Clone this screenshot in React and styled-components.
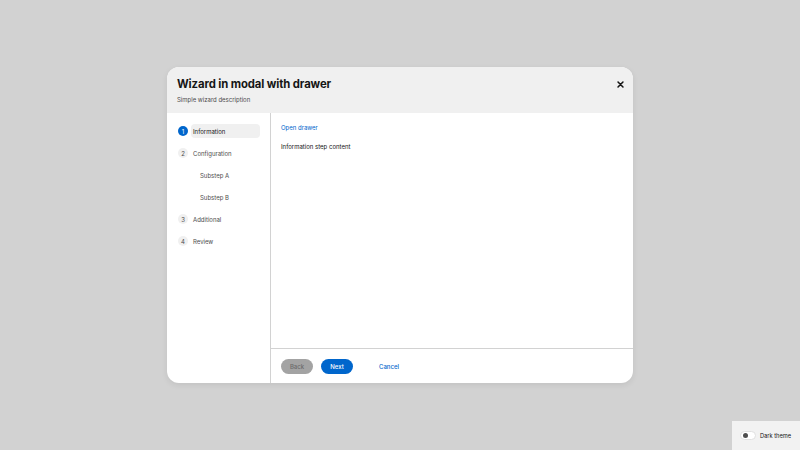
import React, { useState } from 'react';
import styled, { createGlobalStyle } from 'styled-components';

const GlobalStyle = createGlobalStyle`
  html, body {
    margin: 0;
    padding: 0;
    height: 100%;
  }
  body {
    background: #d2d2d2;
    font-family: Inter, "Noto Sans", sans-serif;
    color: #151515;
  }
  #root {
    height: 100%;
  }
`;

const steps = [
  { id: 1, name: 'Information', number: 1 },
  { id: 2, name: 'Configuration', number: 2 },
  { id: 3, name: 'Substep A', sub: true },
  { id: 4, name: 'Substep B', sub: true },
  { id: 5, name: 'Additional', number: 3 },
  { id: 6, name: 'Review', number: 4 },
];

const App = () => {
  const [current] = useState(1);
  const [dark, setDark] = useState(false);

  return (
    <>
      <GlobalStyle />
      <Page>
        <Modal>
          <Header>
            <TitleBlock>
              <Title>Wizard in modal with drawer</Title>
              <Description>Simple wizard description</Description>
            </TitleBlock>
            <CloseButton aria-label="Close">
              <svg width="7" height="7" viewBox="0 0 10 10">
                <path d="M1.5 1.5 L8.5 8.5 M8.5 1.5 L1.5 8.5" stroke="#151515" strokeWidth="2.2" strokeLinecap="round" />
              </svg>
            </CloseButton>
          </Header>
          <Wizard>
            <Nav>
              {steps.map((step) => (
                <NavItem key={step.id} $sub={step.sub}>
                  {!step.sub && <StepNumber $active={step.id === current}>{step.number}</StepNumber>}
                  <StepLabel $active={step.id === current}>{step.name}</StepLabel>
                </NavItem>
              ))}
            </Nav>
            <Main>
              <Body>
                <LinkText>Open drawer</LinkText>
                <BodyText>Information step content</BodyText>
              </Body>
              <Footer>
                <Button $variant="disabled">Back</Button>
                <Button $variant="primary">Next</Button>
                <Button $variant="link">Cancel</Button>
              </Footer>
            </Main>
          </Wizard>
        </Modal>
        <ThemePanel>
          <Switch $on={dark} onClick={() => setDark(!dark)}>
            <Knob $on={dark} />
          </Switch>
          <SwitchLabel>Dark theme</SwitchLabel>
        </ThemePanel>
      </Page>
    </>
  );
};

const Page = styled.div`
  position: relative;
  height: 450px;
  display: flex;
  align-items: center;
  justify-content: center;
`;

const Modal = styled.div`
  width: 466px;
  height: 316px;
  background: #ffffff;
  border-radius: 12px;
  overflow: hidden;
  display: flex;
  flex-direction: column;
  box-shadow: 0 2px 6px rgba(0, 0, 0, 0.08);
`;

const Header = styled.div`
  background: #f0f0f0;
  height: 46px;
  box-sizing: border-box;
  padding: 10px 7px 0 10px;
  display: flex;
  justify-content: space-between;
  align-items: flex-start;
  flex-shrink: 0;
`;

const TitleBlock = styled.div`
  display: flex;
  flex-direction: column;
`;

const Title = styled.h1`
  margin: 0;
  font-size: 11.3px;
  font-weight: 700;
  line-height: 15px;
  letter-spacing: -0.1px;
  color: #151515;
`;

const Description = styled.p`
  margin: 4px 0 0 0;
  font-size: 6px;
  line-height: 8px;
  color: #4d4d4d;
`;

const CloseButton = styled.button`
  border: none;
  background: transparent;
  padding: 0;
  margin-top: 1px;
  width: 12px;
  height: 12px;
  display: flex;
  align-items: center;
  justify-content: center;
  cursor: pointer;
`;

const Wizard = styled.div`
  flex: 1;
  display: flex;
  min-height: 0;
`;

const Nav = styled.div`
  width: 104px;
  flex-shrink: 0;
  border-right: 1px solid #d2d2d2;
  padding: 11px 10px 0 11px;
  box-sizing: border-box;
  display: flex;
  flex-direction: column;
  gap: 8px;
`;

const NavItem = styled.div`
  height: 14px;
  display: flex;
  align-items: center;
  gap: 3px;
  padding-left: ${({ $sub }) => ($sub ? '20px' : '0')};
`;

const StepNumber = styled.span`
  width: 10px;
  height: 10px;
  border-radius: 50%;
  flex-shrink: 0;
  display: flex;
  align-items: center;
  justify-content: center;
  font-size: 6px;
  background: ${({ $active }) => ($active ? '#0066cc' : '#f0f0f0')};
  color: ${({ $active }) => ($active ? '#ffffff' : '#4d4d4d')};
`;

const StepLabel = styled.span`
  flex: 1;
  height: 14px;
  display: flex;
  align-items: center;
  padding-left: 2px;
  border-radius: 4px;
  font-size: 6px;
  color: ${({ $active }) => ($active ? '#151515' : '#4d4d4d')};
  background: ${({ $active }) => ($active ? '#f0f0f0' : 'transparent')};
`;

const Main = styled.div`
  flex: 1;
  display: flex;
  flex-direction: column;
`;

const Body = styled.div`
  flex: 1;
  padding: 11px 10px 0 10px;
  display: flex;
  flex-direction: column;
  gap: 11px;
`;

const LinkText = styled.span`
  font-size: 6px;
  line-height: 8px;
  color: #0066cc;
`;

const BodyText = styled.span`
  font-size: 6px;
  line-height: 8px;
  color: #151515;
`;

const Footer = styled.div`
  height: 35px;
  border-top: 1px solid #d2d2d2;
  box-sizing: border-box;
  padding: 0 10px;
  display: flex;
  align-items: center;
  gap: 8px;
`;

const Button = styled.button`
  height: 15px;
  border: none;
  border-radius: 8px;
  font-family: inherit;
  font-size: 6px;
  font-weight: 500;
  width: ${({ $variant }) => ($variant === 'link' ? 'auto' : '32px')};
  padding: ${({ $variant }) => ($variant === 'link' ? '0 10px' : '0')};
  margin-left: ${({ $variant }) => ($variant === 'link' ? '8px' : '0')};
  background: ${({ $variant }) =>
    $variant === 'primary' ? '#0066cc' : $variant === 'disabled' ? '#a3a3a3' : 'transparent'};
  color: ${({ $variant }) =>
    $variant === 'primary' ? '#ffffff' : $variant === 'disabled' ? '#6a6a6a' : '#0066cc'};
`;

const ThemePanel = styled.div`
  position: absolute;
  right: 0;
  bottom: 0;
  width: 68px;
  height: 29px;
  background: #f2f2f2;
  display: flex;
  align-items: center;
  gap: 4px;
  padding-left: 8px;
  box-sizing: border-box;
`;

const Switch = styled.div`
  width: 16px;
  height: 9px;
  border-radius: 5px;
  background: ${({ $on }) => ($on ? '#0066cc' : '#ffffff')};
  border: 1px solid #e0e0e0;
  box-sizing: border-box;
  display: flex;
  align-items: center;
  padding: 0 2px;
  justify-content: ${({ $on }) => ($on ? 'flex-end' : 'flex-start')};
  cursor: pointer;
`;

const Knob = styled.div`
  width: 5px;
  height: 5px;
  border-radius: 50%;
  background: ${({ $on }) => ($on ? '#ffffff' : '#4d4d4d')};
`;

const SwitchLabel = styled.span`
  font-size: 5.7px;
  color: #151515;
`;

export default App;
